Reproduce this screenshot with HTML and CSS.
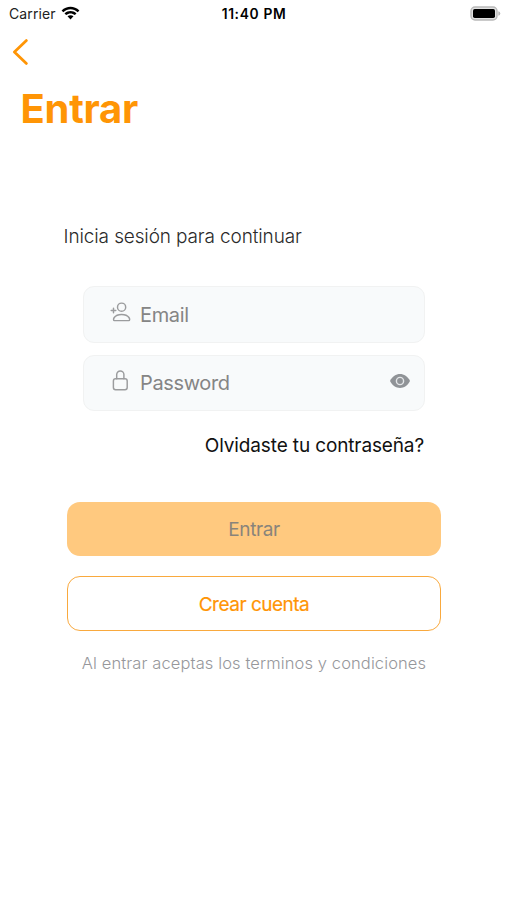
FILE: index.html
```
<!DOCTYPE html>
<html lang="es">
<head>
<meta charset="utf-8">
<title>Entrar</title>
<link rel="stylesheet" href="styles.css">
</head>
<body>
<header class="status">
  <div class="carrier"><span class="carrier-name">Carrier</span>
    <svg class="wifi" width="19" height="14" viewBox="0 0 19 14"><path d="M0.6 4.5C5.7-.4 13.3-.4 18.4 4.5L16.7 6.2C12.5 2.3 6.5 2.3 2.3 6.2ZM3.5 7.4C7 4.2 12 4.2 15.5 7.4L13.8 9.1C11.2 6.9 7.8 6.9 5.2 9.1ZM6.5 10.3C8.3 8.9 10.7 8.9 12.5 10.3L9.5 13.4Z"/></svg>
  </div>
  <span class="time">11:40 PM</span>
  <svg class="battery" width="32" height="16" viewBox="0 0 32 16"><rect x="2" y="1" width="26" height="13" rx="4" fill="#e2e2e2" stroke="#b9b9b9" stroke-width="1.4"/><rect x="4" y="3" width="22" height="9" rx="1.7"/><path d="M29.3 5.2q2 .6 2 2.3t-2 2.3z" fill="#b9b9b9"/></svg>
</header>
<nav class="nav"><svg width="18" height="28" viewBox="0 0 18 28"><path d="M14.4 2.6 2.4 14 14.4 25.4"/></svg></nav>
<h1 class="title"><span>Entrar</span></h1>
<main class="login">
  <p class="intro"><span>Inicia sesión para continuar</span></p>
  <div class="fields">
    <div class="field">
      <svg class="icon" width="22" height="22" viewBox="0 0 22 22"><circle cx="11.6" cy="6.2" r="4.1"/><path d="M4.4 19.6C2.4 19.6 3.6 13.4 11.6 13.4S20.8 19.6 18.8 19.6ZM1.2 9.4h4.6M3.5 7.1v4.6"/></svg>
      <span class="label email">Email</span>
    </div>
    <div class="field">
      <svg class="icon" width="22" height="22" viewBox="0 0 22 22"><rect x="3.4" y="8.8" width="13.8" height="11" rx="2.2"/><path d="M6.7 8.8V4.6a3.6 3.6 0 0 1 7.2 0V8.8"/></svg>
      <span class="label password">Password</span>
      <svg class="eye" width="20" height="14" viewBox="0 0 20 14"><path d="M0 7C4.4-2.2 15.6-2.2 20 7 15.6 16.2 4.4 16.2 0 7Z" fill="#909397"/><circle cx="10" cy="7" r="3.6" fill="#909397" stroke="#e4e6e8" stroke-width="1.4"/></svg>
    </div>
  </div>
  <p class="forgot"><span>Olvidaste tu contraseña?</span></p>
  <div class="button primary"><span>Entrar</span></div>
  <div class="button outline"><span>Crear cuenta</span></div>
  <p class="terms"><span>Al entrar aceptas los terminos y condiciones</span></p>
</main>
</body>
</html>
```
FILE: styles.css
```
* { box-sizing: border-box; }
body { margin: 0; min-height: 900px; background: #fff; font-family: Inter, "Liberation Sans", sans-serif; color: #000; }
h1, p { margin: 0; }
svg { display: block; flex: none; }
span { white-space: nowrap; }
.status { display: grid; grid-template-columns: 1fr auto 1fr; align-items: center; height: 27px; padding: 0 6px 0 9px; font-size: 14px; }
.carrier { display: flex; align-items: center; gap: 5.5px; }
.wifi { margin-top: -1px; }
.carrier-name { color: #222; letter-spacing: 0.1px; }
.time { margin-right: 2px; font-size: 13.8px; font-weight: 600; letter-spacing: 0.65px; }
.battery { justify-self: end; }
.nav { height: 53px; padding: 11px 0 0 12px; }
.nav path { fill: none; stroke: #ff9505; stroke-width: 2.8; stroke-linecap: round; stroke-linejoin: round; }
.title { height: 60px; padding-left: 20px; font-size: 40px; line-height: 58px; font-weight: 700; letter-spacing: -0.3px; color: #ff9505; }
.title span { margin-left: 0.6px; }
.login { padding: 83px 66px 0 67px; }
.intro { margin-left: -3.4px; font-size: 19px; line-height: 28px; font-weight: 300; letter-spacing: -0.13px; color: #2a2a2a; }
.fields { display: flex; flex-direction: column; gap: 12px; width: 342px; margin: 35px 0 0 16px; }
.field { display: flex; align-items: center; height: 57px; padding: 0 14px 0 26px; border: 1px solid #f1f2f2; border-radius: 11px; background: #f8fafb; }
.field + .field { height: 56px; }
.icon { margin-top: -5px; fill: none; stroke: #9b9c9e; stroke-width: 1.45; stroke-linecap: round; stroke-linejoin: round; }
.label { margin-left: 8px; font-size: 20px; line-height: 28px; letter-spacing: -0.35px; color: #858585; }
.eye { margin: -5px 0 0 auto; }
.forgot { margin: 21px 17px 0 0; text-align: right; font-size: 19px; line-height: 28px; letter-spacing: -0.13px; color: #111; }
.button { display: flex; align-items: center; justify-content: center; height: 55px; padding-top: 1px; border-radius: 13px; font-size: 19px; letter-spacing: -0.4px; }
.primary { height: 54px; margin-top: 42px; background: #ffc97f; color: #89847b; }
.outline { margin-top: 20px; border: 1.5px solid #f9a93e; color: #ff9505; }
.outline span { letter-spacing: -0.5px; -webkit-text-stroke: 0.2px #ff9505; }
.terms { margin-top: 18px; text-align: center; font-size: 16.5px; line-height: 28px; font-weight: 300; letter-spacing: 0.11px; color: #96979b; }
```
